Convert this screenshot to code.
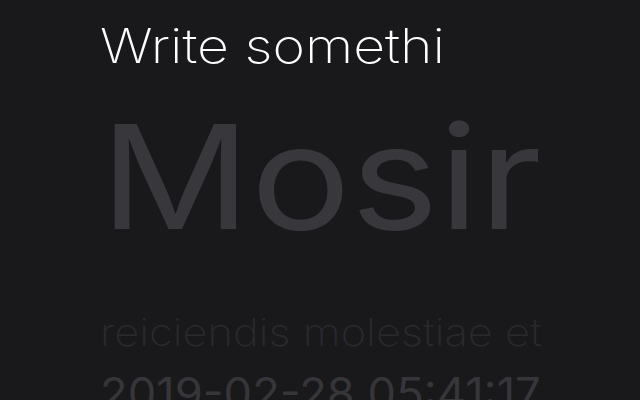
export default function App() {
  return (
    <div className="h-[400px] w-[640px] overflow-hidden bg-[#19181b] pl-[100px] font-['Inter',sans-serif]">
      <div className="origin-left scale-x-[1.155] pt-[18px] text-[48px] font-extralight leading-[56px] text-white">
        Write somethi
      </div>
      <div className="mt-[28px] origin-left scale-x-[1.15] text-[145px] font-normal leading-[150px] text-[#38373b]">
        Mosir
      </div>
      <div className="mt-[60px] origin-left scale-x-[1.145] text-[38px] font-extralight leading-[40px] text-[#2a292d]">
        reiciendis molestiae et
      </div>
      <div className="mt-[16px] origin-left scale-x-[1.03] text-[44px] font-normal leading-[50px] text-[#363539]">
        2019-02-28 05:41:17
      </div>
    </div>
  );
}
